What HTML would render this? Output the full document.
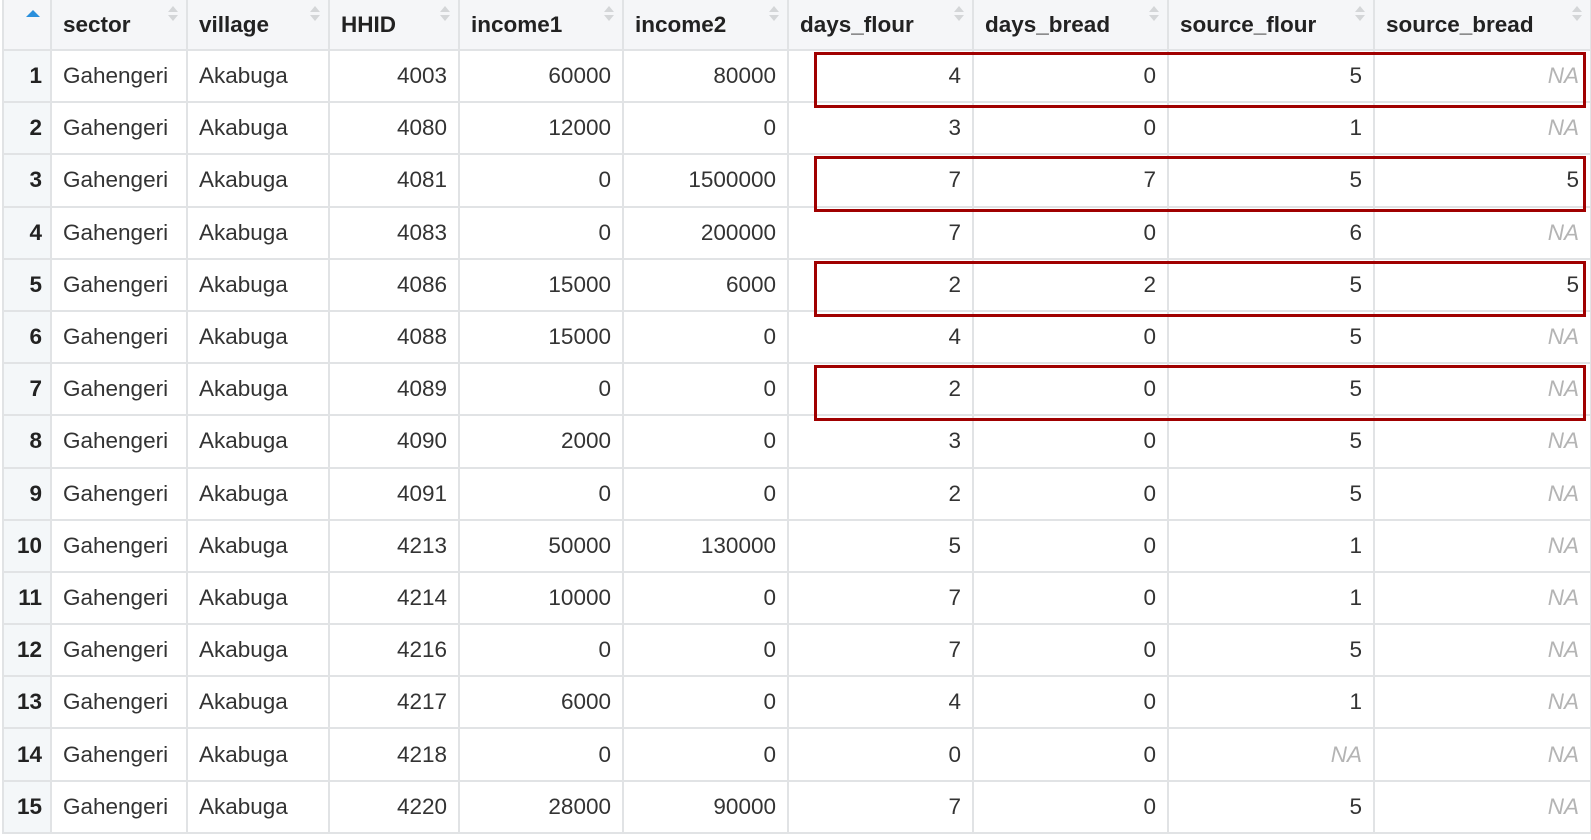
<!DOCTYPE html>
<html><head><meta charset="utf-8"><style>
body{margin:0;width:1591px;height:840px;background:#fff;overflow:hidden;position:relative;font-family:"Liberation Sans",sans-serif;}
table{position:absolute;left:2px;top:0;border-collapse:collapse;table-layout:fixed;width:1588px;font-size:22.5px;color:#333;}
td,th{border:2px solid #e1e3e5;padding:0 11px;white-space:nowrap;overflow:hidden;}
th{height:49px;background:#f5f6f8;text-align:left;font-weight:bold;color:#222;position:relative;border-top:none;}
th .s{position:absolute;right:8px;top:6px;width:10px;height:14px;}
th .s:before{content:"";position:absolute;left:0;top:0;border:5px solid transparent;border-bottom:6px solid #d4d6d8;border-top:0;}
th .s:after{content:"";position:absolute;left:0;top:9px;border:5px solid transparent;border-top:6px solid #d4d6d8;border-bottom:0;}
td{height:50.2px;}
td.n{background:#f4f7f9;font-weight:bold;color:#222;text-align:right;padding:0 8px;}
td.r{text-align:right;}
td.na{text-align:right;color:#b4b4b4;font-style:italic;}
.box{position:absolute;left:814px;width:766px;height:50px;border:3px solid #a00000;}
</style></head><body>
<table>
<colgroup><col style="width:48px"><col style="width:136px"><col style="width:142px"><col style="width:130px"><col style="width:164px"><col style="width:165px"><col style="width:185px"><col style="width:195px"><col style="width:206px"><col style="width:217px"></colgroup>
<tr><th style="position:relative"><span style="position:absolute;left:22px;top:10px;border:7px solid transparent;border-bottom:7px solid #2a8fdc;border-top:0"></span></th><th>sector<span class="s"></span></th><th>village<span class="s"></span></th><th>HHID<span class="s"></span></th><th>income1<span class="s"></span></th><th>income2<span class="s"></span></th><th>days_flour<span class="s"></span></th><th>days_bread<span class="s"></span></th><th>source_flour<span class="s"></span></th><th>source_bread<span class="s"></span></th></tr>
<tr><td class="n">1</td><td>Gahengeri</td><td>Akabuga</td><td class="r">4003</td><td class="r">60000</td><td class="r">80000</td><td class="r">4</td><td class="r">0</td><td class="r">5</td><td class="na">NA</td></tr>
<tr><td class="n">2</td><td>Gahengeri</td><td>Akabuga</td><td class="r">4080</td><td class="r">12000</td><td class="r">0</td><td class="r">3</td><td class="r">0</td><td class="r">1</td><td class="na">NA</td></tr>
<tr><td class="n">3</td><td>Gahengeri</td><td>Akabuga</td><td class="r">4081</td><td class="r">0</td><td class="r">1500000</td><td class="r">7</td><td class="r">7</td><td class="r">5</td><td class="r">5</td></tr>
<tr><td class="n">4</td><td>Gahengeri</td><td>Akabuga</td><td class="r">4083</td><td class="r">0</td><td class="r">200000</td><td class="r">7</td><td class="r">0</td><td class="r">6</td><td class="na">NA</td></tr>
<tr><td class="n">5</td><td>Gahengeri</td><td>Akabuga</td><td class="r">4086</td><td class="r">15000</td><td class="r">6000</td><td class="r">2</td><td class="r">2</td><td class="r">5</td><td class="r">5</td></tr>
<tr><td class="n">6</td><td>Gahengeri</td><td>Akabuga</td><td class="r">4088</td><td class="r">15000</td><td class="r">0</td><td class="r">4</td><td class="r">0</td><td class="r">5</td><td class="na">NA</td></tr>
<tr><td class="n">7</td><td>Gahengeri</td><td>Akabuga</td><td class="r">4089</td><td class="r">0</td><td class="r">0</td><td class="r">2</td><td class="r">0</td><td class="r">5</td><td class="na">NA</td></tr>
<tr><td class="n">8</td><td>Gahengeri</td><td>Akabuga</td><td class="r">4090</td><td class="r">2000</td><td class="r">0</td><td class="r">3</td><td class="r">0</td><td class="r">5</td><td class="na">NA</td></tr>
<tr><td class="n">9</td><td>Gahengeri</td><td>Akabuga</td><td class="r">4091</td><td class="r">0</td><td class="r">0</td><td class="r">2</td><td class="r">0</td><td class="r">5</td><td class="na">NA</td></tr>
<tr><td class="n">10</td><td>Gahengeri</td><td>Akabuga</td><td class="r">4213</td><td class="r">50000</td><td class="r">130000</td><td class="r">5</td><td class="r">0</td><td class="r">1</td><td class="na">NA</td></tr>
<tr><td class="n">11</td><td>Gahengeri</td><td>Akabuga</td><td class="r">4214</td><td class="r">10000</td><td class="r">0</td><td class="r">7</td><td class="r">0</td><td class="r">1</td><td class="na">NA</td></tr>
<tr><td class="n">12</td><td>Gahengeri</td><td>Akabuga</td><td class="r">4216</td><td class="r">0</td><td class="r">0</td><td class="r">7</td><td class="r">0</td><td class="r">5</td><td class="na">NA</td></tr>
<tr><td class="n">13</td><td>Gahengeri</td><td>Akabuga</td><td class="r">4217</td><td class="r">6000</td><td class="r">0</td><td class="r">4</td><td class="r">0</td><td class="r">1</td><td class="na">NA</td></tr>
<tr><td class="n">14</td><td>Gahengeri</td><td>Akabuga</td><td class="r">4218</td><td class="r">0</td><td class="r">0</td><td class="r">0</td><td class="r">0</td><td class="na">NA</td><td class="na">NA</td></tr>
<tr><td class="n">15</td><td>Gahengeri</td><td>Akabuga</td><td class="r">4220</td><td class="r">28000</td><td class="r">90000</td><td class="r">7</td><td class="r">0</td><td class="r">5</td><td class="na">NA</td></tr>
</table>
<div class="box" style="top:52px"></div>
<div class="box" style="top:156px"></div>
<div class="box" style="top:261px"></div>
<div class="box" style="top:365px"></div>
</body></html>
